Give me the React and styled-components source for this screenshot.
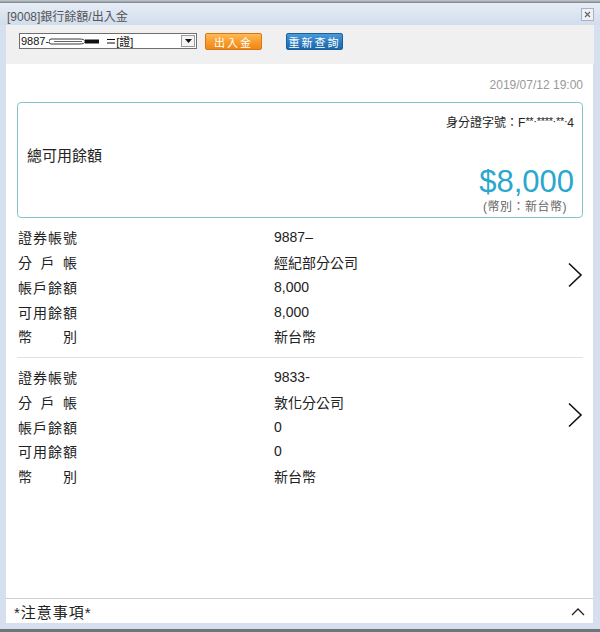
import React from "react"
import styled, {createGlobalStyle} from "styled-components"

const GlobalStyle = createGlobalStyle`
    html, body {
        margin: 0;
        padding: 0;
        background: #fff;
    }
    body {
        font-family: "Liberation Sans", Arial, "Noto Sans CJK TC", sans-serif;
        color: #222;
    }
`

const accounts = [
    {no: "9887–", branch: "經紀部分公司", balance: "8,000", available: "8,000", currency: "新台幣"},
    {no: "9833-", branch: "敦化分公司", balance: "0", available: "0", currency: "新台幣"},
]

function Chevron({dir}) {
    if (dir === "up") {
        return (
            <svg width="14" height="9" viewBox="0 0 14 9">
                <polyline points="1,8 7,2 13,8" fill="none" stroke="#222" strokeWidth="1.3"/>
            </svg>
        )
    }
    return (
        <svg width="16" height="26" viewBox="0 0 16 26">
            <polyline points="2,1.5 14,13 2,24.5" fill="none" stroke="#111" strokeWidth="1.6"/>
        </svg>
    )
}

function AccountSection({acc, last}) {
    return (
        <Section last={last}>
            <Rows>
                <Label>證券帳號</Label><Value>{acc.no}</Value>
                <Label>分戶帳</Label><Value>{acc.branch}</Value>
                <Label>帳戶餘額</Label><Value>{acc.balance}</Value>
                <Label>可用餘額</Label><Value>{acc.available}</Value>
                <Label>幣別</Label><Value>{acc.currency}</Value>
            </Rows>
            <Arrow><Chevron/></Arrow>
        </Section>
    )
}

export default function App() {
    return (
        <>
        <GlobalStyle/>
        <Window>
            <TopStrip/>
            <TitleBar>
                <Title>[9008]銀行餘額/出入金</Title>
                <CloseBtn>
                    <svg width="7" height="7" viewBox="0 0 7 7">
                        <path d="M1 1 L6 6 M6 1 L1 6" stroke="#666" strokeWidth="1.2"/>
                    </svg>
                </CloseBtn>
            </TitleBar>
            <Frame>
                <Toolbar>
                    <Select>
                        <SelectText>
                            9887-
                            <svg width="66" height="9" viewBox="0 0 66 9">
                                <path d="M2 2 H30 Q36 2 36 4.5 Q36 7 30 7 H2 Q0 7 0 4.5 Q0 2 2 2 Z" fill="none" stroke="#222" strokeWidth="0.9"/>
                                <path d="M5 4.5 H33" stroke="#222" strokeWidth="0.7"/>
                                <rect x="36" y="2.5" width="14" height="4" fill="#111"/>
                                <path d="M58 2.5 H66 M58 6 H66" stroke="#111" strokeWidth="1"/>
                            </svg>
                            [證]
                        </SelectText>
                        <DropBtn>
                            <svg width="7" height="4" viewBox="0 0 7 4"><polygon points="0,0 7,0 3.5,4" fill="#111"/></svg>
                        </DropBtn>
                    </Select>
                    <Button variant="orange">出入金</Button>
                    <Button variant="blue">重新查詢</Button>
                </Toolbar>
                <Content>
                    <DateLine>2019/07/12 19:00</DateLine>
                    <Card>
                        <IdLine>身分證字號：F<Mask>**·****·**·</Mask>4</IdLine>
                        <BalanceRow>
                            <BalanceLabel>總可用餘額</BalanceLabel>
                            <AmountBlock>
                                <Amount>$8,000</Amount>
                                <Currency>(幣別：新台幣)</Currency>
                            </AmountBlock>
                        </BalanceRow>
                    </Card>
                    {accounts.map((acc, i) => (
                        <AccountSection key={i} acc={acc} last={i === accounts.length - 1}/>
                    ))}
                </Content>
                <Footer>
                    <FooterText>*注意事項*</FooterText>
                    <Chevron dir="up"/>
                </Footer>
            </Frame>
            <BottomStrip/>
        </Window>
        </>
    )
}

const Window = styled.div`
    width: 600px;
    height: 632px;
    display: flex;
    flex-direction: column;
    background: #d6dfee;
    overflow: hidden;
`
const TopStrip = styled.div`
    height: 3px;
    background: linear-gradient(#c8ccd2, #7d828a);
    flex: none;
`
const TitleBar = styled.div`
    height: 22px;
    flex: none;
    display: flex;
    align-items: center;
    justify-content: space-between;
    padding: 0 7px 0 7px;
    background: linear-gradient(#e6edf6, #d1dded);
`
const Title = styled.div`
    font-size: 12px;
    color: #555;
    margin-top: 2px;
`
const CloseBtn = styled.div`
    width: 11px;
    height: 11px;
    border: 1px solid #a9b3c0;
    background: #eef2f7;
    display: flex;
    align-items: center;
    justify-content: center;
    margin-right: -1px;
`
const Frame = styled.div`
    flex: 1;
    display: flex;
    flex-direction: column;
    padding: 0 6px 6px 6px;
    min-height: 0;
`
const Toolbar = styled.div`
    height: 39px;
    flex: none;
    display: flex;
    align-items: flex-start;
    padding: 8px 0 0 13px;
    box-sizing: border-box;
    background: #f0f0f0;
`
const Select = styled.div`
    width: 178px;
    height: 16px;
    box-sizing: border-box;
    border: 1px solid #6f6f6f;
    background: #fff;
    display: flex;
    align-items: center;
    justify-content: space-between;
`
const SelectText = styled.div`
    font-size: 11px;
    color: #111;
    display: flex;
    align-items: center;
    padding-left: 1px;
    white-space: nowrap;
    & svg {
        margin: 0 1px 0 0;
    }
`
const DropBtn = styled.div`
    width: 14px;
    height: 12px;
    margin-right: 1px;
    border: 1px solid #9a9a9a;
    box-sizing: border-box;
    display: flex;
    align-items: center;
    justify-content: center;
    background: #f4f4f4;
`
const Button = styled.div`
    height: 17px;
    width: 57px;
    box-sizing: border-box;
    border-radius: 2px;
    font-size: 11px;
    color: #fff;
    display: flex;
    align-items: center;
    justify-content: center;
    letter-spacing: 2px;
    margin-left: ${p => p.variant === "orange" ? "8px" : "24px"};
    border: 1px solid ${p => p.variant === "orange" ? "#dc7410" : "#19609c"};
    background: ${p => p.variant === "orange"
        ? "linear-gradient(#fdbb55, #f79a2a 55%, #f08818)"
        : "linear-gradient(#4c9ad8, #2a7cc0 55%, #1c68ab)"};
`
const Content = styled.div`
    flex: 1;
    min-height: 0;
    background: #fff;
    display: flex;
    flex-direction: column;
    margin-right: 1px;
`
const DateLine = styled.div`
    padding: 13px 10px 0 0;
    font-size: 12px;
    line-height: 16px;
    color: #999;
    text-align: right;
`
const Card = styled.div`
    margin: 9px 10px 0 11px;
    border: 1px solid #86c4cb;
    border-radius: 4px;
    padding: 8px 8px 2px 9px;
`
const IdLine = styled.div`
    font-size: 12px;
    line-height: 20px;
    text-align: right;
    color: #222;
`
const Mask = styled.span`
    font-size: 11px;
    vertical-align: 2px;
    letter-spacing: -0.3px;
`
const BalanceRow = styled.div`
    display: flex;
    justify-content: space-between;
    align-items: flex-start;
`
const BalanceLabel = styled.div`
    font-size: 15px;
    line-height: 20px;
    margin-top: 13px;
    color: #222;
`
const AmountBlock = styled.div`
    margin-top: 32px;
    text-align: right;
`
const Amount = styled.div`
    font-size: 31px;
    line-height: 34px;
    color: #2aa7cd;
`
const Currency = styled.div`
    font-size: 12px;
    line-height: 16px;
    color: #666;
    letter-spacing: 0.5px;
    padding-right: 7px;
`
const Section = styled.div`
    display: flex;
    align-items: flex-start;
    justify-content: space-between;
    margin: 0 10px 0 11px;
    padding: 7px 0 8px 1px;
    border-bottom: ${p => p.last ? "none" : "1px solid #dde3e8"};
`
const Rows = styled.div`
    display: grid;
    grid-template-columns: 256px 1fr;
    grid-auto-rows: 24.75px;
    align-items: center;
`
const Label = styled.div`
    width: 59px;
    font-size: 14px;
    color: #222;
    white-space: nowrap;
    text-align: justify;
    text-align-last: justify;
    text-justify: inter-character;
`
const Value = styled.div`
    font-size: 14px;
    color: #222;
`
const Arrow = styled.div`
    margin-top: 37px;
    line-height: 0;
`
const Footer = styled.div`
    height: 25px;
    flex: none;
    box-sizing: border-box;
    border-top: 1px solid #cfcfcf;
    background: #fff;
    display: flex;
    align-items: center;
    justify-content: space-between;
    padding: 0 8px 0 8px;
    margin-right: 1px;
`
const FooterText = styled.div`
    font-size: 15px;
    letter-spacing: 1px;
    color: #222;
`
const BottomStrip = styled.div`
    height: 3px;
    flex: none;
    background: #6f747b;
`
